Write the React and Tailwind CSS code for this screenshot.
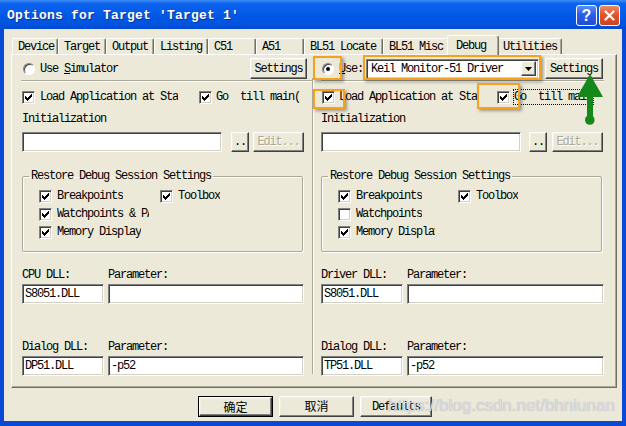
const raised =
  "bg-[#ece9d8] border border-t-white border-l-white border-r-[#404040] border-b-[#404040] shadow-[inset_-1px_-1px_0_#808080,inset_1px_1px_0_#f1efe2]";
const sunken =
  "border border-t-[#808080] border-l-[#808080] border-r-white border-b-white shadow-[inset_1px_1px_0_#404040,inset_-1px_-1px_0_#d4d0c8]";

function Box({ on = true }) {
  return (
    <span className={`w-[13px] h-[13px] shrink-0 bg-white flex items-center justify-center ${sunken}`}>
      {on && (
        <svg width="7" height="7" viewBox="0 0 7 7" shapeRendering="crispEdges">
          <path
            fill="#000"
            d="M6 0h1v1h-1zM5 1h2v1h-2zM0 2h1v1h-1zM4 2h3v1h-3zM0 3h2v1h-2zM3 3h3v1h-3zM0 4h5v1h-5zM1 5h3v1h-3zM2 6h1v1h-1z"
          />
        </svg>
      )}
    </span>
  );
}

function Radio({ on = false }) {
  return (
    <span className="w-[12px] h-[12px] shrink-0 rounded-full bg-white border border-t-[#808080] border-l-[#808080] border-r-white border-b-white shadow-[inset_1px_1px_0_#404040] flex items-center justify-center">
      {on && <span className="w-[4px] h-[4px] rounded-full bg-black" />}
    </span>
  );
}

function Btn({ className = "", disabled, children }) {
  return (
    <div className={`h-[20px] flex items-center justify-center shrink-0 ${raised} ${className}`}>
      <span className={disabled ? "text-[#aca899] [text-shadow:1px_1px_0_#fff]" : ""}>{children}</span>
    </div>
  );
}

function Field({ className = "", children }) {
  return (
    <div className={`h-[20px] bg-white pl-[2px] flex items-center whitespace-pre shrink-0 ${sunken} ${className}`}>
      {children}
    </div>
  );
}

function Tab({ className, label, active }) {
  if (active) {
    return (
      <div className={`${className} h-[20px] -mx-[2px] -mb-px relative z-10 bg-[#ece9d8] border-t border-l border-white border-r border-r-[#716f64] shadow-[inset_-1px_0_0_#aca899] rounded-t-[3px] pl-[8px] flex items-center`}>
        {label}
      </div>
    );
  }
  return (
    <div className={`${className} h-[16px] bg-[#ece9d8] border-t border-l border-white border-r border-r-[#716f64] shadow-[inset_-1px_0_0_#aca899] rounded-t-[2px] pl-[5px] flex items-center`}>
      {label}
    </div>
  );
}

function Group({ cols, rows }) {
  return (
    <fieldset className="mt-[18px] w-[281px] h-[82px] border border-[#aca899] rounded-[2px] shadow-[inset_1px_1px_0_#fff,1px_1px_0_#fff]">
      <legend className="ml-[6px] px-[2px] leading-[12px]">Restore Debug Session Settings</legend>
      <div className={`pt-[7px] pl-[16px] grid ${cols} gap-y-[4px]`}>
        {rows.map((r, i) => (
          <div key={i} className={`h-[14px] flex items-center gap-[5px] ${r.clip || ""}`}>
            <Box on={r.on} />
            <span className="overflow-hidden whitespace-nowrap">{r.label}</span>
          </div>
        ))}
      </div>
    </fieldset>
  );
}

function Dll({ first, firstVal, secondVal, w1, w2 }) {
  return (
    <>
      <div className="mt-[17px] h-[12px] leading-[12px] flex">
        <span className="w-[86px]">{first}</span>
        <span>Parameter:</span>
      </div>
      <div className="mt-[3px] flex gap-[4px]">
        <Field className={w1}>{firstVal}</Field>
        <Field className={w2}>{secondVal}</Field>
      </div>
    </>
  );
}

export default function App() {
  const tabs = [
    ["Device", "w-[46px]"],
    ["Target", "w-[48px]"],
    ["Output", "w-[48px]"],
    ["Listing", "w-[54px]"],
    ["C51", "w-[48px]"],
    ["A51", "w-[48px]"],
    ["BL51 Locate", "w-[79px]"],
    ["BL51 Misc", "w-[66px]"],
    ["Debug", "w-[52px]", true],
    ["Utilities", "w-[65px]"],
  ];

  return (
    <div className="relative w-[626px] h-[426px] bg-[#0a48d6] flex flex-col overflow-hidden font-['Liberation_Mono','Noto_Sans_CJK_SC',monospace] text-[12px] leading-[14px] tracking-[-1.2px] text-black">
      {/* title bar */}
      <div className="h-[29px] shrink-0 flex items-start pl-[7px] pr-[6px] bg-[linear-gradient(180deg,#3d8ef7_0%,#0d63ee_12%,#0058e6_55%,#0253dd_85%,#0049d2_100%)]">
        <span className="mt-[8px] font-bold text-[13px] leading-[15px] tracking-[0.2px] text-white [text-shadow:1px_1px_0_#0b3390]">
          Options for Target 'Target 1'
        </span>
        <div className="ml-auto mt-[5px] flex gap-[2px]">
          <div className="w-[21px] h-[21px] rounded-[3px] border border-white bg-[linear-gradient(180deg,#5b8ff5,#2a5fe6_45%,#1f4fd6)] flex items-center justify-center text-white font-['Liberation_Sans',sans-serif] font-bold text-[16px] tracking-normal">
            ?
          </div>
          <div className="w-[21px] h-[21px] rounded-[3px] border border-white bg-[linear-gradient(180deg,#ee8a68,#e0552c_45%,#c8441f)] flex items-center justify-center">
            <svg width="11" height="11" viewBox="0 0 11 11">
              <path d="M1.5 1.5l8 8M9.5 1.5l-8 8" stroke="#fff" strokeWidth="2.2" strokeLinecap="round" />
            </svg>
          </div>
        </div>
      </div>

      {/* client */}
      <div className="flex-1 mx-[4px] mb-[5px] bg-[#ece9d8] pl-[7px] pr-[5px] pt-[6px] flex flex-col">
        <div className="h-[19px] flex items-end pl-[1px]">
          {tabs.map(([label, w, active]) => (
            <Tab key={label} label={label} className={w} active={active} />
          ))}
        </div>

        <div className="w-[606px] h-[334px] flex border border-t-white border-l-white border-r-[#716f64] border-b-[#716f64] shadow-[inset_-1px_-1px_0_#aca899]">
          {/* left: simulator */}
          <div className="w-[300px] pl-[10px] flex flex-col">
            <div className="mt-[3px] h-[21px] w-[285px] flex items-center justify-between">
              <div className="flex items-center gap-[5px] pl-[1px]">
                <Radio />
                <span>
                  Use <span className="underline">S</span>imulator
                </span>
              </div>
              <Btn className="w-[57px] h-[21px]">Settings</Btn>
            </div>
            <div className="mt-px -ml-px h-[2px] border-t border-t-[#aca899] border-b border-b-white" />
            <div className="mt-[8px] h-[14px] flex items-center">
              <div className="w-[177px] flex items-center gap-[5px]">
                <Box />
                <span className="w-[138px] overflow-hidden whitespace-nowrap">Load Application at Startup</span>
              </div>
              <div className="flex items-center gap-[4px]">
                <Box />
                <span className="w-[85px] overflow-hidden whitespace-pre">Go  till main()</span>
              </div>
            </div>
            <div className="mt-[9px] h-[12px] leading-[12px]">Initialization</div>
            <div className="mt-[7px] flex">
              <Field className="w-[200px]" />
              <Btn className="ml-[9px] w-[18px]">..</Btn>
              <Btn className="ml-[4px] w-[51px]" disabled>
                Edit...
              </Btn>
            </div>
            <Group
              cols="grid-cols-[121px_auto]"
              rows={[
                { label: "Breakpoints", on: true },
                { label: "Toolbox", on: true },
                { label: "Watchpoints & PA", on: true, clip: "w-[110px] overflow-hidden" },
                { label: "", on: null, clip: "invisible" },
                { label: "Memory Display", on: true },
              ]}
            />
            <Dll first="CPU DLL:" firstVal="S8051.DLL" secondVal="" w1="w-[82px]" w2="w-[196px]" />
            <div className="mt-[20px]" />
            <Dll first="Dialog DLL:" firstVal="DP51.DLL" secondVal="-p52" w1="w-[82px]" w2="w-[196px]" />
          </div>

          {/* separator */}
          <div className="w-[2px] mt-[23px] h-[296px] border-l border-l-[#aca899] border-r border-r-white" />

          {/* right: target driver */}
          <div className="flex-1 pl-[7px] flex flex-col">
            <div className="mt-[3px] h-[21px] flex items-center">
              <div className="ml-px flex items-center gap-[5px]">
                <Radio on />
                <span>
                  <span className="underline">U</span>se:
                </span>
              </div>
              <div className={`ml-[3px] w-[173px] h-[20px] bg-white pl-[4px] pr-[2px] flex items-center justify-between ${sunken}`}>
                <span>Keil Monitor-51 Driver</span>
                <div className={`w-[15px] h-[15px] flex items-center justify-center ${raised}`}>
                  <svg width="7" height="4" viewBox="0 0 7 4">
                    <path d="M0 0h7L3.5 4z" fill="#000" />
                  </svg>
                </div>
              </div>
              <Btn className="ml-[6px] w-[58px] h-[21px]">Settings</Btn>
            </div>
            <div className="mt-px h-[2px] w-[283px] border-t border-t-[#aca899] border-b border-b-white" />
            <div className="mt-[8px] h-[14px] flex items-center">
              <div className="ml-px w-[175px] flex items-center gap-[4px]">
                <Box />
                <span className="w-[138px] overflow-hidden whitespace-nowrap">Load Application at Startup</span>
              </div>
              <div className="flex items-center gap-[3px]">
                <Box />
                <span className="w-[81px] h-[16px] border border-dotted border-black overflow-hidden whitespace-pre leading-[14px]">
                  Go  till main()
                </span>
              </div>
            </div>
            <div className="mt-[9px] h-[12px] leading-[12px]">Initialization</div>
            <div className="mt-[7px] flex">
              <Field className="w-[200px]" />
              <Btn className="ml-[8px] w-[18px]">..</Btn>
              <Btn className="ml-[5px] w-[51px]" disabled>
                Edit...
              </Btn>
            </div>
            <Group
              cols="grid-cols-[120px_auto]"
              rows={[
                { label: "Breakpoints", on: true },
                { label: "Toolbox", on: true },
                { label: "Watchpoints", on: false },
                { label: "", on: null, clip: "invisible" },
                { label: "Memory Display", on: true, clip: "w-[97px] overflow-hidden" },
              ]}
            />
            <Dll first="Driver DLL:" firstVal="S8051.DLL" secondVal="" w1="w-[82px]" w2="w-[197px]" />
            <div className="mt-[20px]" />
            <Dll first="Dialog DLL:" firstVal="TP51.DLL" secondVal="-p52" w1="w-[82px]" w2="w-[197px]" />
          </div>
        </div>

        {/* dialog buttons */}
        <div className="mt-[8px] pl-[187px] flex gap-[6px]">
          <div className="w-[75px] h-[21px] border border-black flex">
            <div className={`flex-1 flex items-center justify-center ${raised}`}>
              <span className="font-['Noto_Sans_CJK_SC',sans-serif] tracking-normal text-[12px]">确定</span>
            </div>
          </div>
          <Btn className="w-[75px] h-[21px]">
            <span className="font-['Noto_Sans_CJK_SC',sans-serif] tracking-normal">取消</span>
          </Btn>
          <Btn className="w-[72px] h-[21px]">Defaults</Btn>
        </div>
      </div>

      {/* annotations drawn over the screenshot */}
      <div className="absolute left-[313px] top-[56px] w-[29px] h-[24px] border-2 border-[#f7a21e] shadow-[2px_2px_3px_rgba(0,0,0,0.35)]" />
      <div className="absolute left-[363px] top-[55px] w-[178px] h-[25px] border-2 border-[#f7a21e] shadow-[2px_2px_3px_rgba(0,0,0,0.35)]" />
      <div className="absolute left-[313px] top-[89px] w-[32px] h-[20px] border-2 border-[#f7a21e] shadow-[2px_2px_3px_rgba(0,0,0,0.35)]" />
      <div className="absolute left-[477px] top-[83px] w-[43px] h-[26px] border-2 border-[#f7a21e] shadow-[2px_2px_3px_rgba(0,0,0,0.35)]" />
      <svg className="absolute left-[576px] top-[72px]" width="28" height="54" viewBox="0 0 28 54">
        <path d="M14 2L1 25h26z" fill="#14891a" />
        <rect x="11" y="24" width="6" height="24" fill="#14891a" />
        <circle cx="13.8" cy="48" r="4.8" fill="#14891a" />
      </svg>
      <div className="absolute left-[388px] top-[396px] font-['Liberation_Sans',sans-serif] text-[17px] leading-[20px] tracking-normal text-[#d9dae2] [text-shadow:0_0_1px_rgba(120,120,130,0.5)]">
        https://blog.csdn.net/bhniunan
      </div>
    </div>
  );
}
